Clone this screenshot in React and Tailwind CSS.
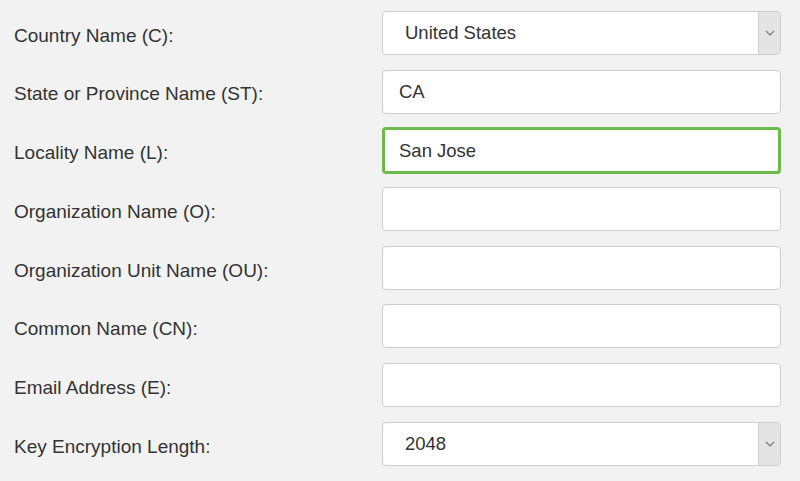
const fields = [
  { label: "Country Name (C):", type: "select", value: "United States" },
  { label: "State or Province Name (ST):", type: "input", value: "CA" },
  { label: "Locality Name (L):", type: "input", value: "San Jose", focus: true },
  { label: "Organization Name (O):", type: "input", value: "" },
  { label: "Organization Unit Name (OU):", type: "input", value: "" },
  { label: "Common Name (CN):", type: "input", value: "" },
  { label: "Email Address (E):", type: "input", value: "" },
  { label: "Key Encryption Length:", type: "select", value: "2048" },
];

function Chevron() {
  return (
    <svg width="10" height="6" viewBox="0 0 10 6" fill="none">
      <path d="M1 1l4 4 4-4" stroke="#777" strokeWidth="1.2" />
    </svg>
  );
}

function Field({ field }) {
  if (field.type === "select") {
    return (
      <div className="flex h-[44px] w-[399px] rounded-[4px] border border-[#cdcdcd] bg-white overflow-hidden">
        <div className="flex-1 flex items-center pl-[22px] text-[18.5px] text-[#333]">
          {field.value}
        </div>
        <div className="w-[22px] flex items-center justify-center bg-[#e4e4e4] border-l border-[#d2d2d2]">
          <Chevron />
        </div>
      </div>
    );
  }
  return (
    <div
      className={`flex items-center h-[44px] w-[399px] rounded-[4px] bg-white text-[18.5px] text-[#333] ${
        field.focus
          ? "border-[3px] border-[#6cbb4a] pl-[14px] h-[47px] -my-[1.5px]"
          : "border border-[#cdcdcd] pl-[16px]"
      }`}
    >
      {field.value}
    </div>
  );
}

export default function App() {
  return (
    <div
      className="w-[800px] h-[481px] bg-[#f2f2f2] overflow-hidden pt-[11px]"
      style={{ fontFamily: '"Liberation Sans", Arial, sans-serif' }}
    >
      <div className="flex flex-col gap-[14.7px]">
        {fields.map((f) => (
          <div key={f.label} className="flex items-center h-[44px]">
            <div className="w-[382px] pl-[14px] pt-[6px] text-[19px] text-[#333]">
              {f.label}
            </div>
            <Field field={f} />
          </div>
        ))}
      </div>
    </div>
  );
}
